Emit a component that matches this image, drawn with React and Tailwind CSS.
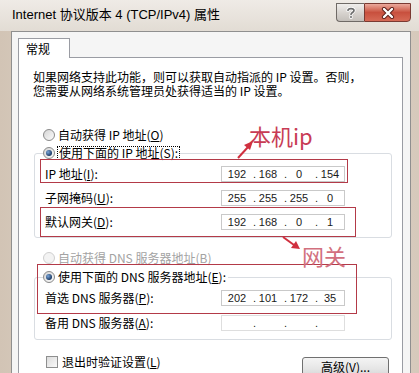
import { Fragment } from 'react';

const Acc = ({ children }) => (
  <span className="underline underline-offset-[1px]">{children}</span>
);

const Radio = ({ checked, disabled }) => (
  <span
    className={`flex h-[12px] w-[12px] shrink-0 items-center justify-center rounded-full border ${
      disabled
        ? 'border-[#cfcfcf] bg-[#f3f3f3]'
        : 'border-[#8a8a8a] bg-linear-to-br from-[#d6d6d6] to-[#fbfbfb]'
    }`}
  >
    {checked && (
      <span className="h-[6px] w-[6px] rounded-full bg-[radial-gradient(circle_at_35%_35%,#7aa6da,#1c3b66_70%)]" />
    )}
  </span>
);

const IpField = ({ parts, faint }) => (
  <div
    className={`flex h-[16px] w-[124px] items-center border bg-white pl-[3px] font-['Liberation_Sans',sans-serif] text-[11px] leading-none text-[#1a1a1a] ${
      faint ? 'border-[#dedede]' : 'border-[#c9c9c9]'
    }`}
  >
    {parts.map((p, i) => (
      <Fragment key={i}>
        <span className="w-[24px] text-center">{p}</span>
        {i < 3 && <span className="w-[7px] text-right">.</span>}
      </Fragment>
    ))}
  </div>
);

const Row = ({ label, children }) => (
  <div className="flex h-[16px] items-center pl-[10px]">
    <div className="w-[176px] text-[12px] leading-[14px] text-black">{label}</div>
    {children}
  </div>
);

const App = () => {
  return (
    <div className="relative h-[373px] w-[419px] overflow-hidden bg-linear-to-r from-[#d2c4b5] via-[#e7e2dc] to-[#d6c9bb] font-['Noto_Sans_CJK_SC',sans-serif]">
      {/* Title bar */}
      <div className="flex h-[31px] items-start bg-linear-to-b from-[#efebe6] to-[#e2dcd4]">
        <div className="pl-[12px] pt-[7px] font-['Liberation_Sans','Noto_Sans_CJK_SC',sans-serif] text-[13px] leading-[16px] text-black">
          Internet 协议版本 4 (TCP/IPv4) 属性
        </div>
        <div className="ml-auto mr-[8px] mt-[3px] flex">
          <div className="flex h-[19px] w-[28px] items-center justify-center rounded-bl-[4px] border border-r-0 border-[#6f6a66] bg-linear-to-b from-[#f0eeec] via-[#d8d4d0] to-[#c4bfba]">
            <svg width="10" height="12" viewBox="0 0 10 12">
              <path
                d="M2 3.5 C2 1 8 1 8 3.5 C8 5.5 5 5.5 5 7.5 M5 9.5 V10.5"
                fill="none"
                stroke="#ffffff"
                strokeWidth="3.2"
                strokeLinecap="round"
              />
              <path
                d="M2 3.5 C2 1 8 1 8 3.5 C8 5.5 5 5.5 5 7.5 M5 9.5 V10.5"
                fill="none"
                stroke="#6b6b6b"
                strokeWidth="1.6"
                strokeLinecap="round"
              />
            </svg>
          </div>
          <div className="flex h-[19px] w-[47px] items-center justify-center rounded-br-[4px] border border-[#7a3a32] bg-linear-to-b from-[#eaa99c] via-[#c8503e] to-[#d66a56]">
            <svg width="14" height="12" viewBox="0 0 14 12">
              <path d="M3 2 L11 10 M11 2 L3 10" stroke="#5a1e18" strokeWidth="4.2" strokeLinecap="round" />
              <path d="M3 2 L11 10 M11 2 L3 10" stroke="#ffffff" strokeWidth="2.4" strokeLinecap="round" />
            </svg>
          </div>
        </div>
      </div>

      {/* Client area */}
      <div className="ml-[11px] mr-[8px] h-[350px] border border-[#8f8f8f] bg-[#f5f5f5] pl-[6px] pr-[7px] pt-[6px]">
        <div className="relative z-10 flex h-[20px] w-[52px] items-center border border-b-0 border-[#9a9ca3] bg-white pl-[7px] text-[12px] leading-[14px] text-black">
          常规
        </div>

        {/* Tab page */}
        <div className="-mt-px flex h-[330px] flex-col border border-[#9a9ca3] bg-white">
          <p className="ml-[14px] mt-[12px] text-[12px] leading-[14px] text-black">
            如果网络支持此功能，则可以获取自动指派的 IP 设置。否则，
            <br />
            您需要从网络系统管理员处获得适当的 IP 设置。
          </p>

          <div className="ml-[24px] mt-[30px] flex h-[14px] items-center gap-[3px] text-[12px] leading-[14px] text-black">
            <Radio />
            <span>
              自动获得 IP 地址(<Acc>O</Acc>)
            </span>
          </div>

          <fieldset className="ml-[15px] mr-[10px] mt-[4px] rounded-[3px] border border-[#d9dde2] px-0 pb-[7px]">
            <legend className="ml-[8px] flex h-[14px] items-center gap-[2px] text-[12px] leading-[12px] text-black">
              <Radio checked />
              <span className="border border-dotted border-black px-px">
                使用下面的 IP 地址(<Acc>S</Acc>):
              </span>
            </legend>
            <div className="flex flex-col gap-[8px] pt-[6px]">
              <Row label={<>IP 地址(<Acc>I</Acc>):</>}>
                <IpField parts={['192', '168', '0', '154']} />
              </Row>
              <Row label={<>子网掩码(<Acc>U</Acc>):</>}>
                <IpField parts={['255', '255', '255', '0']} />
              </Row>
              <Row label={<>默认网关(<Acc>D</Acc>):</>}>
                <IpField parts={['192', '168', '0', '1']} />
              </Row>
            </div>
          </fieldset>

          <div className="ml-[24px] mt-[13px] flex h-[14px] items-center gap-[3px] text-[12px] leading-[14px] text-[#a3a3a3]">
            <Radio disabled />
            <span>
              自动获得 DNS 服务器地址(<Acc>B</Acc>)
            </span>
          </div>

          <fieldset className="ml-[15px] mr-[10px] mt-[5px] rounded-[3px] border border-[#d9dde2] px-0 pb-[8px]">
            <legend className="ml-[8px] flex h-[14px] items-center gap-[3px] text-[12px] leading-[14px] text-black">
              <Radio checked />
              <span className="pr-[2px]">
                使用下面的 DNS 服务器地址(<Acc>E</Acc>):
              </span>
            </legend>
            <div className="flex flex-col gap-[9px] pt-[6px]">
              <Row label={<>首选 DNS 服务器(<Acc>P</Acc>):</>}>
                <IpField parts={['202', '101', '172', '35']} />
              </Row>
              <Row label={<>备用 DNS 服务器(<Acc>A</Acc>):</>}>
                <IpField parts={['', '', '', '']} faint />
              </Row>
            </div>
          </fieldset>

          <div className="mt-[15px] flex items-start">
            <div className="ml-[27px] flex h-[13px] items-center gap-[4px] text-[12px] leading-[14px] text-black">
              <span className="h-[12px] w-[12px] border border-[#8e8f8f] bg-linear-to-br from-[#dcdcdc] to-[#fafafa]" />
              <span>
                退出时验证设置(<Acc>L</Acc>)
              </span>
            </div>
            <button className="ml-auto mr-[13px] mt-[2px] flex h-[23px] w-[87px] items-start justify-center rounded-[3px] border border-[#707070] bg-linear-to-b from-[#f4f4f4] via-[#e6e6e6] to-[#d0d0d0] pt-[2px] text-[12px] leading-[13px] text-black">
              高级(<Acc>V</Acc>)...
            </button>
          </div>
        </div>
      </div>

      {/* Red annotations drawn over the dialog */}
      <div className="pointer-events-none absolute left-[40px] top-[159px] h-[24px] w-[308px] border border-[#b33a48]" />
      <div className="pointer-events-none absolute left-[40px] top-[207px] h-[30px] w-[316px] border border-[#b33a48]" />
      <div className="pointer-events-none absolute left-[37px] top-[264px] h-[50px] w-[320px] border border-[#b33a48]" />

      <div className="pointer-events-none absolute left-[249px] top-[124px] text-[22px] leading-none text-[#c83c55]">
        本机ip
      </div>
      <div className="pointer-events-none absolute left-[302px] top-[244px] text-[22px] leading-none text-[#d2707e]">
        网关
      </div>

      <svg className="pointer-events-none absolute inset-0" width="419" height="373">
        <line x1="238" y1="158" x2="248" y2="147" stroke="#d0303f" strokeWidth="2" />
        <polygon points="253,141 244,145 250,150" fill="#d0303f" />
        <line x1="283" y1="237" x2="294" y2="245" stroke="#d0303f" strokeWidth="2" />
        <polygon points="300,249 291,248 296,241" fill="#d0303f" />
      </svg>
    </div>
  );
};

export default App;
